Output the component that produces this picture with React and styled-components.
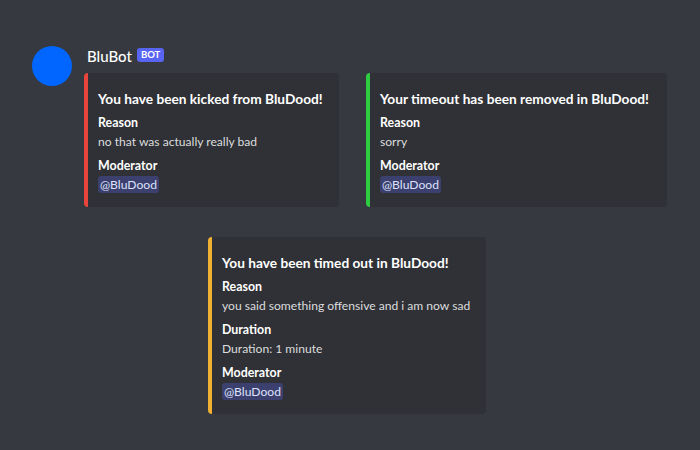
import React from 'react';
import styled, { createGlobalStyle } from 'styled-components';

const GlobalStyle = createGlobalStyle`
  html, body {
    margin: 0;
    background: #36393f;
    font-family: 'Lato', 'Noto Sans', sans-serif;
  }
`;

const Page = styled.div`
  width: 700px;
  height: 450px;
  padding: 46px 0 0 32px;
  box-sizing: border-box;
  background: #36393f;
`;

const Message = styled.div`
  display: flex;
  gap: 12px;
`;

const Avatar = styled.div`
  width: 40px;
  height: 40px;
  border-radius: 50%;
  background: #0066ff;
  flex-shrink: 0;
`;

const Content = styled.div`
  display: flex;
  flex-direction: column;
`;

const Header = styled.div`
  display: flex;
  align-items: center;
  height: 20px;
  padding-left: 3px;
  margin-bottom: 7px;
`;

const Username = styled.span`
  color: #fff;
  font-size: 15px;
  font-weight: 500;
`;

const BotTag = styled.span`
  margin-left: 5px;
  margin-top: -2px;
  background: #5865f2;
  color: #fff;
  font-size: 9.5px;
  font-weight: 700;
  line-height: 14px;
  height: 14px;
  padding: 0 4px;
  border-radius: 3px;
`;

const Row = styled.div`
  display: flex;
  gap: 27px;
  margin-left: ${p => p.$indent || 0}px;
  margin-bottom: ${p => p.$spacing || 0}px;
`;

const Embed = styled.div`
  width: ${p => p.$width}px;
  box-sizing: border-box;
  background: #2f3136;
  border-left: 4px solid ${p => p.$color};
  border-radius: 4px;
  padding: 16px 10px 13px 10px;
  white-space: nowrap;
`;

const Title = styled.div`
  color: #fff;
  font-size: 13.7px;
  font-weight: 700;
  line-height: 20px;
  margin-bottom: 5px;
`;

const Field = styled.div`
  & + & {
    margin-top: 6px;
  }
`;

const FieldName = styled.div`
  color: #fff;
  font-size: 12.4px;
  font-weight: 700;
  line-height: 18px;
`;

const FieldValue = styled.div`
  color: #dcddde;
  font-size: 12.1px;
  line-height: 19px;
`;

const Mention = styled.span`
  background: rgba(88, 101, 242, 0.3);
  color: #dee0fc;
  padding: 1px 2px;
  border-radius: 3px;
`;

const EmbedCard = ({ color, width, title, fields }) => (
  <Embed $color={color} $width={width}>
    <Title>{title}</Title>
    {fields.map(f => (
      <Field key={f.name}>
        <FieldName>{f.name}</FieldName>
        <FieldValue>{f.mention ? <Mention>{f.value}</Mention> : f.value}</FieldValue>
      </Field>
    ))}
  </Embed>
);

const moderator = { name: 'Moderator', value: '@BluDood', mention: true };

const App = () => (
  <>
    <GlobalStyle />
    <Page>
      <Message>
        <Avatar />
        <Content>
          <Header>
            <Username>BluBot</Username>
            <BotTag>BOT</BotTag>
          </Header>
          <Row $spacing={30}>
            <EmbedCard
              color="#e8453c"
              width={255}
              title="You have been kicked from BluDood!"
              fields={[{ name: 'Reason', value: 'no that was actually really bad' }, moderator]}
            />
            <EmbedCard
              color="#2ecc40"
              width={301}
              title="Your timeout has been removed in BluDood!"
              fields={[{ name: 'Reason', value: 'sorry' }, moderator]}
            />
          </Row>
          <Row $indent={124}>
            <EmbedCard
              color="#f0b132"
              width={278}
              title="You have been timed out in BluDood!"
              fields={[
                { name: 'Reason', value: 'you said something offensive and i am now sad' },
                { name: 'Duration', value: 'Duration: 1 minute' },
                moderator,
              ]}
            />
          </Row>
        </Content>
      </Message>
    </Page>
  </>
);

export default App;
